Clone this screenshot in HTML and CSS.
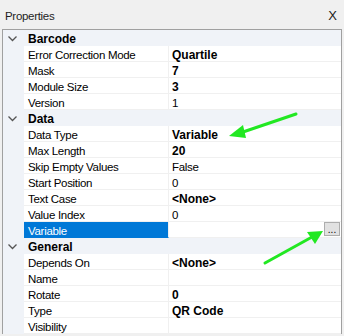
FILE: index.html
```html
<!DOCTYPE html>
<html lang="en">
<head>
    <meta charset="UTF-8">
    <title>Properties</title>
    <link rel="stylesheet" href="styles.css">
</head>
<body>
    <div class="panel">
        <div class="panel-head">
            <span class="panel-title">Properties</span>
            <span class="panel-close">X</span>
        </div>

        <div class="grid">
            <div class="row cat">
                <div class="gutter"><svg class="chev" width="9" height="6" viewBox="0 0 9 6"><path d="M0.5 0.5 L4.5 4.5 L8.5 0.5" fill="none" stroke="#555" stroke-width="1.3"/></svg></div>
                <div class="cat-name">Barcode</div>
            </div>
            <div class="row"><div class="gutter"></div><div class="name">Error Correction Mode</div><div class="val bold">Quartile</div></div>
            <div class="row"><div class="gutter"></div><div class="name">Mask</div><div class="val bold">7</div></div>
            <div class="row"><div class="gutter"></div><div class="name">Module Size</div><div class="val bold">3</div></div>
            <div class="row"><div class="gutter"></div><div class="name">Version</div><div class="val">1</div></div>

            <div class="row cat">
                <div class="gutter"><svg class="chev" width="9" height="6" viewBox="0 0 9 6"><path d="M0.5 0.5 L4.5 4.5 L8.5 0.5" fill="none" stroke="#555" stroke-width="1.3"/></svg></div>
                <div class="cat-name">Data</div>
            </div>
            <div class="row"><div class="gutter"></div><div class="name">Data Type</div><div class="val bold">Variable</div></div>
            <div class="row"><div class="gutter"></div><div class="name">Max Length</div><div class="val bold">20</div></div>
            <div class="row"><div class="gutter"></div><div class="name">Skip Empty Values</div><div class="val">False</div></div>
            <div class="row"><div class="gutter"></div><div class="name">Start Position</div><div class="val">0</div></div>
            <div class="row"><div class="gutter"></div><div class="name">Text Case</div><div class="val bold">&lt;None&gt;</div></div>
            <div class="row"><div class="gutter"></div><div class="name">Value Index</div><div class="val">0</div></div>
            <div class="row"><div class="gutter"></div><div class="name selected">Variable</div><div class="val"><span class="dots">...</span></div></div>

            <div class="row cat">
                <div class="gutter"><svg class="chev" width="9" height="6" viewBox="0 0 9 6"><path d="M0.5 0.5 L4.5 4.5 L8.5 0.5" fill="none" stroke="#555" stroke-width="1.3"/></svg></div>
                <div class="cat-name">General</div>
            </div>
            <div class="row"><div class="gutter"></div><div class="name">Depends On</div><div class="val bold">&lt;None&gt;</div></div>
            <div class="row"><div class="gutter"></div><div class="name">Name</div><div class="val"></div></div>
            <div class="row"><div class="gutter"></div><div class="name">Rotate</div><div class="val bold">0</div></div>
            <div class="row"><div class="gutter"></div><div class="name">Type</div><div class="val bold">QR Code</div></div>
            <div class="row"><div class="gutter"></div><div class="name">Visibility</div><div class="val"></div></div>
        </div>

        <!-- annotation arrows -->
        <svg class="arrows" width="344" height="336" viewBox="0 0 344 336">
            <g stroke="#22e822" stroke-width="3" stroke-linecap="round" fill="none">
                <line x1="296" y1="114" x2="240" y2="133"/>
                <line x1="265" y1="263" x2="312" y2="237"/>
            </g>
            <g fill="#22e822">
                <polygon points="229,136 243,125 246,138"/>
                <polygon points="323,231 307,232 315,244"/>
            </g>
        </svg>
    </div>
</body>
</html>
```

FILE: styles.css
```css
* {
    box-sizing: border-box;
    margin: 0;
    padding: 0;
}

body {
    background-color: #f0f0f0;
    font-family: 'Liberation Sans', Arial, sans-serif;
    font-size: 11.5px;
    letter-spacing: -0.3px;
    color: #000;
}

.panel {
    position: relative;
    width: 344px;
    height: 336px;
    overflow: hidden;
}

.panel-head {
    display: flex;
    justify-content: space-between;
    align-items: center;
    height: 29px;
    padding: 3px 7px 0 5px;
}

.panel-title {
    color: #1e1e1e;
}

.panel-close {
    font-size: 13px;
    letter-spacing: 0;
    color: #222;
    margin-top: -2px;
}

.grid {
    margin-left: 2px;
    width: 340px;
    border: 1px solid #a0a0a0;
    border-bottom: none;
    background-color: #fff;
}

.row {
    display: flex;
    height: 16px;
    line-height: 18px;
}

.gutter {
    width: 21px;
    flex-shrink: 0;
    background-color: #f0f3f8;
    display: flex;
    align-items: center;
    justify-content: center;
}

.chev {
    margin-left: -2px;
    margin-top: 1px;
}

.name {
    width: 145px;
    flex-shrink: 0;
    padding-left: 4px;
    border-right: 1px solid #f0f0f0;
    border-bottom: 1px solid #f0f0f0;
    white-space: nowrap;
    overflow: hidden;
}

.name.selected {
    background-color: #0078d7;
    color: #fff;
    border-bottom-color: #0078d7;
}

.val {
    flex: 1;
    padding-left: 3px;
    border-bottom: 1px solid #f0f0f0;
    position: relative;
}

.bold {
    font-size: 12px;
    font-weight: bold;
    letter-spacing: 0;
}

.cat {
    background-color: #f0f3f8;
}

.cat-name {
    padding-left: 4px;
    font-size: 12px;
    font-weight: bold;
    letter-spacing: 0;
}

.dots {
    position: absolute;
    right: 1px;
    top: 0;
    width: 16px;
    height: 14px;
    border: 1px solid #adadad;
    background-color: #e1e1e1;
    font-size: 10px;
    letter-spacing: 0;
    line-height: 14px;
    text-align: center;
}

.arrows {
    position: absolute;
    left: 0;
    top: 0;
    pointer-events: none;
}
```
